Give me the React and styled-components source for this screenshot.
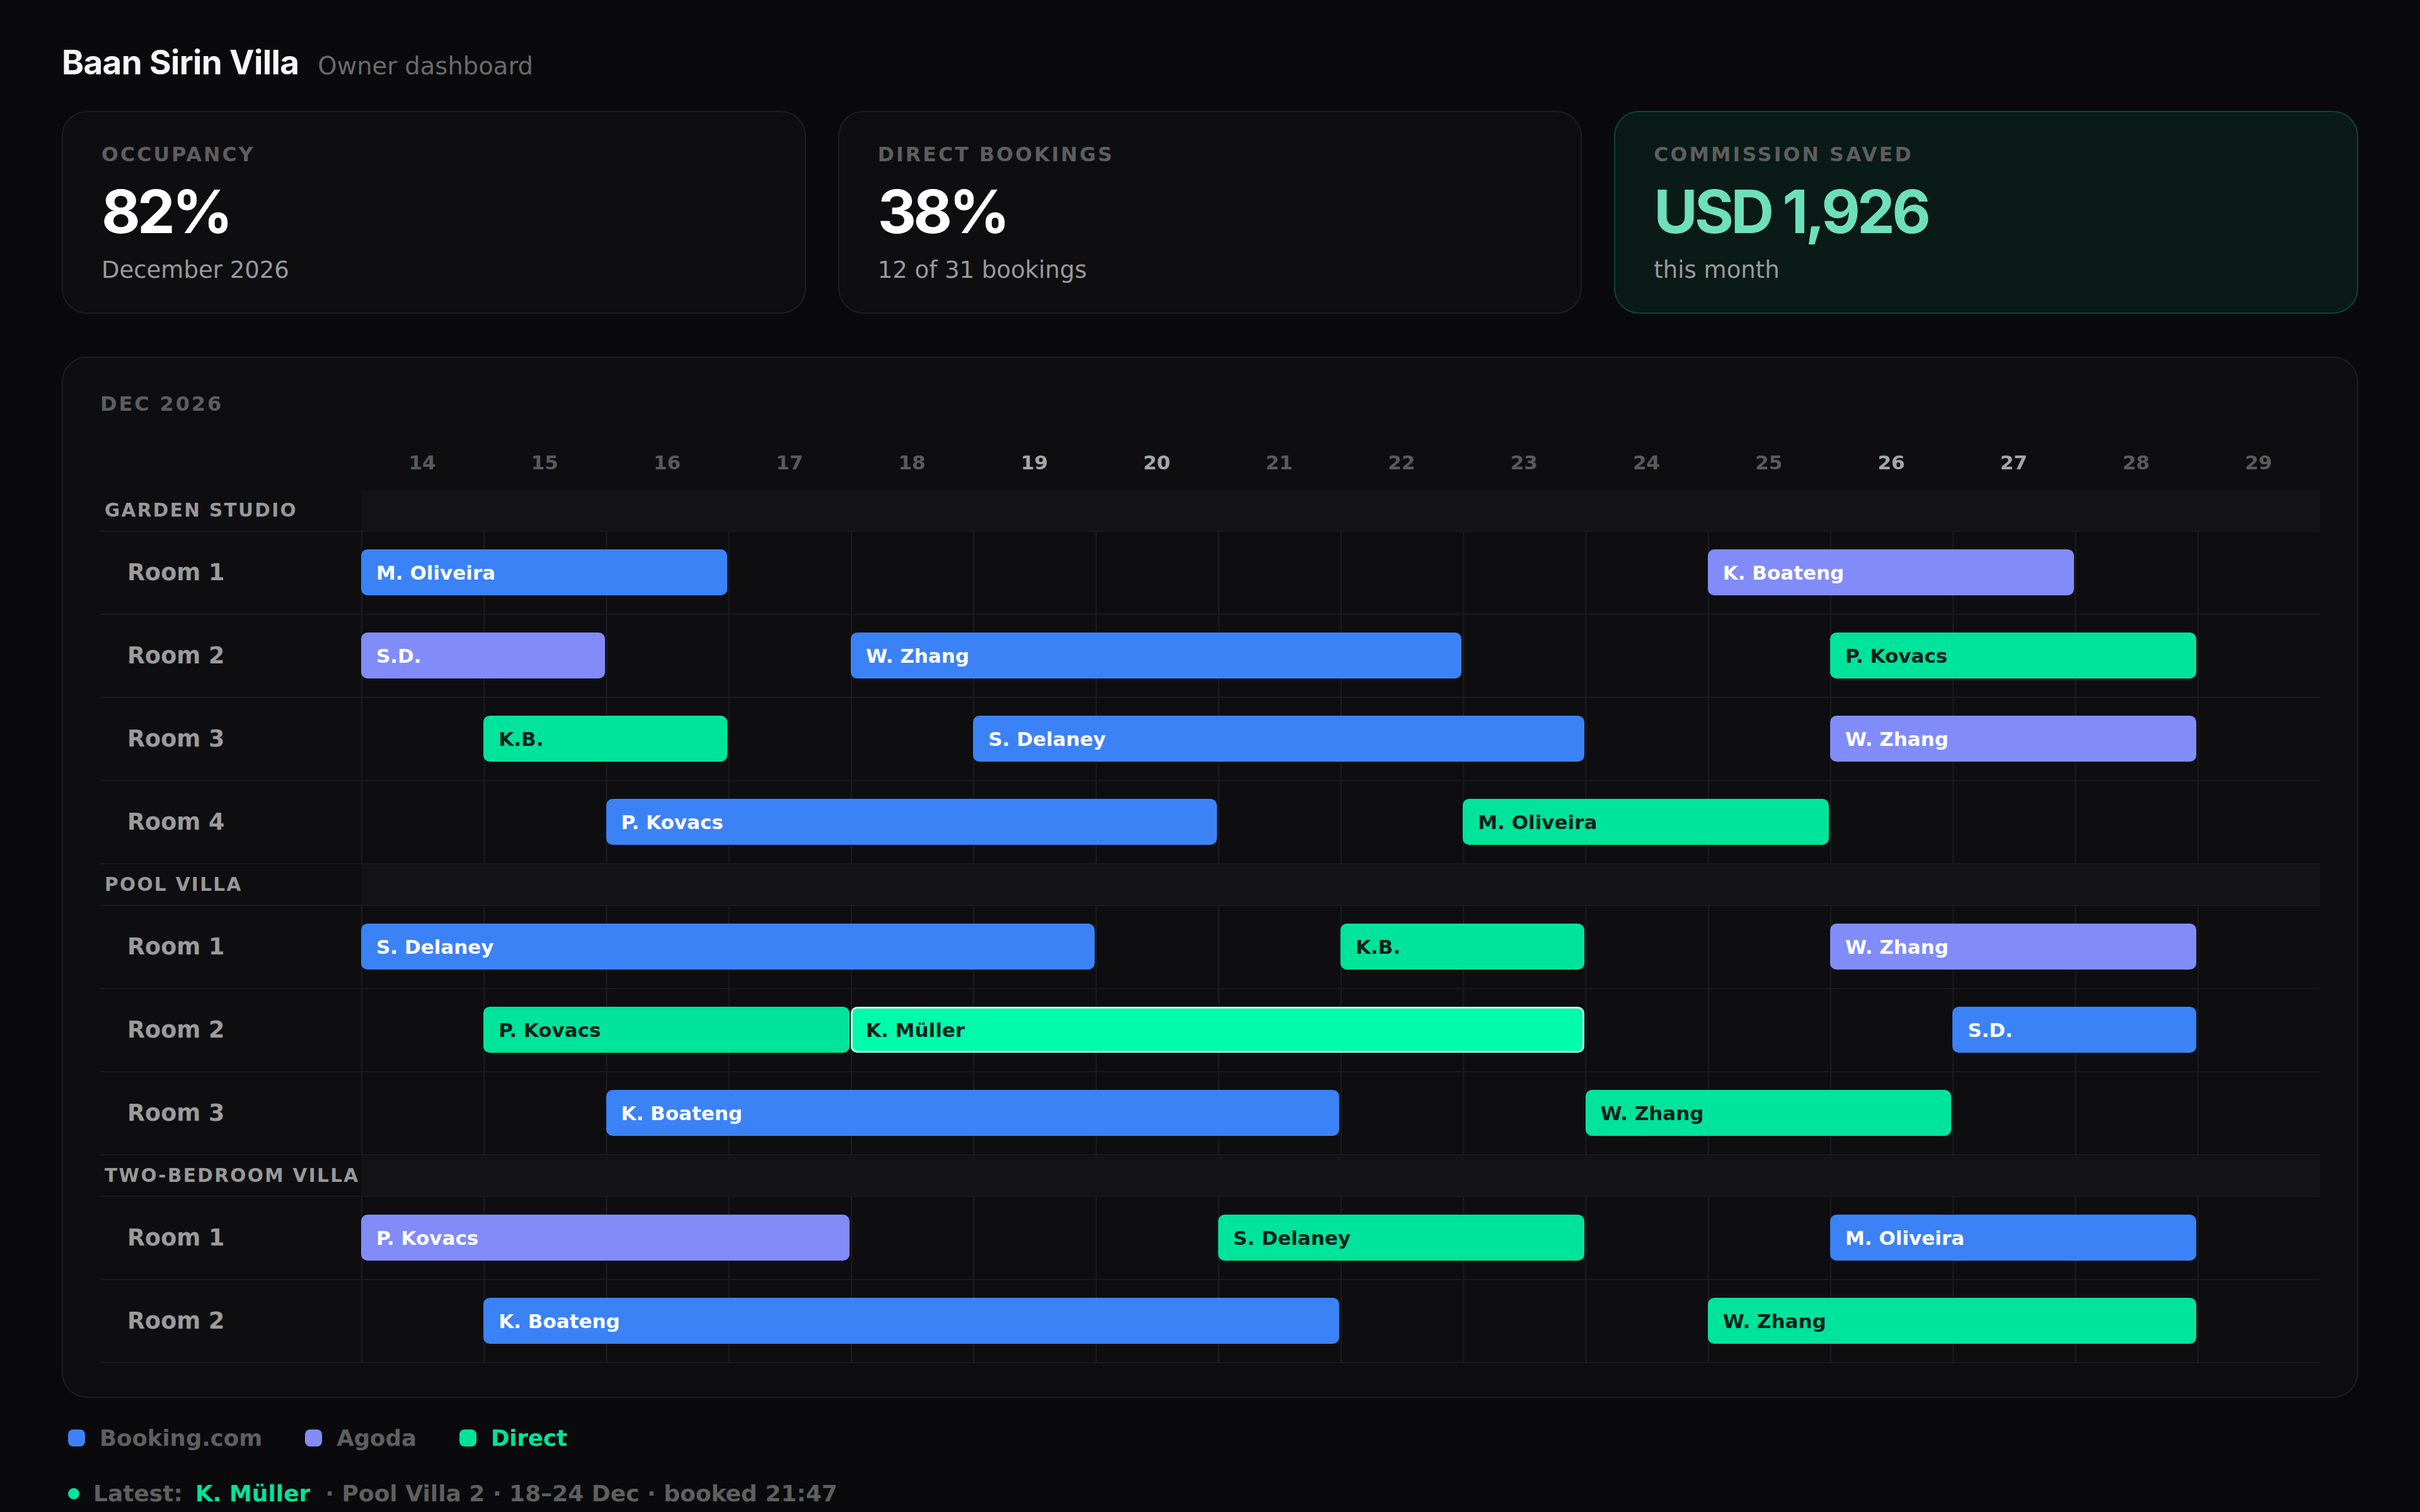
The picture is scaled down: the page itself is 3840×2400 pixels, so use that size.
import React from "react";
import styled, { createGlobalStyle } from "styled-components";

const DAYS = Array.from({ length: 16 }, (_, i) => 14 + i);
const WEEKEND = [19, 20, 26, 27];

const channelColors = {
  booking: { bg: "#3b82f6", fg: "#ffffff" },
  agoda: { bg: "#818cf8", fg: "#ffffff" },
  direct: { bg: "#00e39b", fg: "#06211a" },
};

// start = day of month, nights = number of columns covered
const properties = [
  {
    name: "Garden Studio",
    rooms: [
      [
        { guest: "M. Oliveira", start: 14, nights: 3, ch: "booking" },
        { guest: "K. Boateng", start: 25, nights: 3, ch: "agoda" },
      ],
      [
        { guest: "S.D.", start: 14, nights: 2, ch: "agoda" },
        { guest: "W. Zhang", start: 18, nights: 5, ch: "booking" },
        { guest: "P. Kovacs", start: 26, nights: 3, ch: "direct" },
      ],
      [
        { guest: "K.B.", start: 15, nights: 2, ch: "direct" },
        { guest: "S. Delaney", start: 19, nights: 5, ch: "booking" },
        { guest: "W. Zhang", start: 26, nights: 3, ch: "agoda" },
      ],
      [
        { guest: "P. Kovacs", start: 16, nights: 5, ch: "booking" },
        { guest: "M. Oliveira", start: 23, nights: 3, ch: "direct" },
      ],
    ],
  },
  {
    name: "Pool Villa",
    rooms: [
      [
        { guest: "S. Delaney", start: 14, nights: 6, ch: "booking" },
        { guest: "K.B.", start: 22, nights: 2, ch: "direct" },
        { guest: "W. Zhang", start: 26, nights: 3, ch: "agoda" },
      ],
      [
        { guest: "P. Kovacs", start: 15, nights: 3, ch: "direct" },
        { guest: "K. Müller", start: 18, nights: 6, ch: "direct", fresh: true },
        { guest: "S.D.", start: 27, nights: 2, ch: "booking" },
      ],
      [
        { guest: "K. Boateng", start: 16, nights: 6, ch: "booking" },
        { guest: "W. Zhang", start: 24, nights: 3, ch: "direct" },
      ],
    ],
  },
  {
    name: "Two-Bedroom Villa",
    rooms: [
      [
        { guest: "P. Kovacs", start: 14, nights: 4, ch: "agoda" },
        { guest: "S. Delaney", start: 21, nights: 3, ch: "direct" },
        { guest: "M. Oliveira", start: 26, nights: 3, ch: "booking" },
      ],
      [
        { guest: "K. Boateng", start: 15, nights: 7, ch: "booking" },
        { guest: "W. Zhang", start: 25, nights: 4, ch: "direct" },
      ],
    ],
  },
];

const stats = [
  { label: "Occupancy", value: "82%", note: "December 2026" },
  { label: "Direct bookings", value: "38%", note: "12 of 31 bookings" },
  { label: "Commission saved", value: "USD 1,926", note: "this month", saved: true },
];

const GlobalStyle = createGlobalStyle`
  html, body {
    margin: 0;
    background: #0a0a0c;
  }
  body {
    font-family: "DejaVu Sans", "Liberation Sans", sans-serif;
    color: #e8e8e8;
  }
`;

const Page = styled.div`
  padding: 68px 98px 0;
  min-height: 2400px;
  box-sizing: border-box;
`;

const Header = styled.header`
  display: flex;
  align-items: baseline;
  gap: 30px;
`;

const Title = styled.h1`
  margin: 0;
  font-family: "Inter", "Liberation Sans", sans-serif;
  font-size: 53px;
  font-weight: 700;
  letter-spacing: -0.012em;
  line-height: 1.2;
  color: #f7f7f7;
`;

const Subtitle = styled.span`
  font-size: 38.5px;
  color: #6a6a6a;
`;

const StatGrid = styled.section`
  display: grid;
  grid-template-columns: repeat(3, 1fr);
  gap: 51px;
  margin-top: 44px;
`;

const StatCard = styled.div`
  border: 2px solid ${(p) => (p.$saved ? "#0d4635" : "#1e1e22")};
  background: ${(p) => (p.$saved ? "#0a1a17" : "#0e0e11")};
  border-radius: 40px;
  padding: 47px 61px 45px;
`;

const StatLabel = styled.div`
  font-size: 31.5px;
  font-weight: 700;
  letter-spacing: 0.1em;
  line-height: 40px;
  text-transform: uppercase;
  color: #5e5e5e;
`;

const StatValue = styled.div`
  margin-top: 23px;
  font-family: "Inter", "Liberation Sans", sans-serif;
  font-size: 95px;
  font-weight: 700;
  letter-spacing: -0.05em;
  line-height: 95px;
  color: ${(p) => (p.$saved ? "#6ee0b9" : "#ffffff")};
`;

const StatNote = styled.div`
  margin-top: 24px;
  font-size: 37px;
  line-height: 44px;
  color: #9a9a9a;
`;

const Schedule = styled.section`
  margin-top: 68px;
  border: 2px solid #1e1e22;
  background: #0e0e11;
  border-radius: 40px;
  padding: 53px 59px 53px;
`;

const MonthLabel = styled.div`
  font-size: 32px;
  font-weight: 700;
  letter-spacing: 0.09em;
  line-height: 40px;
  color: #5e5e5e;
`;

const Row = styled.div`
  display: grid;
  grid-template-columns: 414px 1fr;
`;

const DayHeader = styled(Row)`
  margin-top: 44px;
  margin-bottom: 15px;
  height: 58px;
  align-items: center;
`;

const Days = styled.div`
  display: grid;
  grid-template-columns: repeat(16, 1fr);
`;

const DayNum = styled.div`
  text-align: center;
  font-size: 31px;
  font-weight: 700;
  color: ${(p) => (p.$weekend ? "#a6a6a6" : "#5a5a5a")};
`;

const GroupHead = styled(Row)`
  height: 66px;
  box-sizing: border-box;
  border-bottom: 2px solid #1a1a1d;
`;

const GroupName = styled.div`
  display: flex;
  align-items: center;
  padding-left: 7px;
  font-size: 29.5px;
  font-weight: 700;
  letter-spacing: 0.08em;
  text-transform: uppercase;
  color: #989898;
  white-space: nowrap;
`;

const GroupBand = styled.div`
  background: #131316;
`;

const RoomRow = styled(Row)`
  height: 132px;
  box-sizing: border-box;
  border-bottom: 2px solid #1a1a1d;
`;

const RoomName = styled.div`
  display: flex;
  align-items: center;
  padding-left: 43px;
  font-size: 36.5px;
  font-weight: 700;
  color: #9b9b9b;
`;

const Track = styled.div`
  display: grid;
  grid-template-columns: repeat(16, 1fr);
  align-items: center;
  background-image: linear-gradient(to right, #1c1c20 0 2px, transparent 2px);
  background-size: calc(100% / 16) 100%;
`;

const Bar = styled.div`
  grid-row: 1;
  grid-column: ${(p) => p.$col} / span ${(p) => p.$span};
  height: 73px;
  margin-right: 2px;
  box-sizing: border-box;
  border-radius: 10px;
  display: flex;
  align-items: center;
  font-size: 31px;
  font-weight: 700;
  white-space: nowrap;
  overflow: hidden;
  background: ${(p) => (p.$fresh ? "#00fbaa" : channelColors[p.$ch].bg)};
  color: ${(p) => channelColors[p.$ch].fg};
  border: ${(p) => (p.$fresh ? "3px solid #bdf7e4" : "none")};
  padding: 0 ${(p) => (p.$fresh ? "21px" : "24px")};
`;

const Legend = styled.div`
  display: flex;
  align-items: center;
  gap: 68px;
  margin-top: 43px;
  padding-left: 10px;
`;

const LegendItem = styled.div`
  display: flex;
  align-items: center;
  gap: 23px;
  font-size: 35.5px;
  font-weight: 700;
  line-height: 42px;
  color: ${(p) => (p.$active ? "#00e39b" : "#5f5f5f")};
`;

const Swatch = styled.span`
  width: 27px;
  height: 27px;
  border-radius: 8px;
  background: ${(p) => p.$color};
`;

const Latest = styled.div`
  display: flex;
  align-items: center;
  margin-top: 46px;
  padding-left: 10px;
  font-size: 36px;
  font-weight: 700;
  line-height: 42px;
  color: #5f5f5f;
  white-space: pre;
`;

const LiveDot = styled.span`
  width: 18px;
  height: 18px;
  border-radius: 50%;
  background: #00e39b;
  margin-right: 22px;
`;

const Guest = styled.span`
  color: #00e39b;
  margin: 0 24px 0 20px;
`;

export default function App() {
  return (
    <>
      <GlobalStyle />
      <Page>
        <Header>
          <Title>Baan Sirin Villa</Title>
          <Subtitle>Owner dashboard</Subtitle>
        </Header>

        <StatGrid>
          {stats.map((s) => (
            <StatCard key={s.label} $saved={s.saved}>
              <StatLabel>{s.label}</StatLabel>
              <StatValue $saved={s.saved}>{s.value}</StatValue>
              <StatNote>{s.note}</StatNote>
            </StatCard>
          ))}
        </StatGrid>

        <Schedule>
          <MonthLabel>DEC 2026</MonthLabel>
          <DayHeader>
            <div />
            <Days>
              {DAYS.map((d) => (
                <DayNum key={d} $weekend={WEEKEND.includes(d)}>
                  {d}
                </DayNum>
              ))}
            </Days>
          </DayHeader>

          {properties.map((prop) => (
            <React.Fragment key={prop.name}>
              <GroupHead>
                <GroupName>{prop.name}</GroupName>
                <GroupBand />
              </GroupHead>
              {prop.rooms.map((bookings, i) => (
                <RoomRow key={i}>
                  <RoomName>Room {i + 1}</RoomName>
                  <Track>
                    {bookings.map((b) => (
                      <Bar
                        key={b.guest + b.start}
                        $col={b.start - 13}
                        $span={b.nights}
                        $ch={b.ch}
                        $fresh={b.fresh}
                      >
                        {b.guest}
                      </Bar>
                    ))}
                  </Track>
                </RoomRow>
              ))}
            </React.Fragment>
          ))}
        </Schedule>

        <Legend>
          <LegendItem>
            <Swatch $color="#3b82f6" />
            Booking.com
          </LegendItem>
          <LegendItem>
            <Swatch $color="#818cf8" />
            Agoda
          </LegendItem>
          <LegendItem $active>
            <Swatch $color="#00e39b" />
            Direct
          </LegendItem>
        </Legend>

        <Latest>
          <LiveDot />
          Latest:
          <Guest>K. Müller</Guest>
          {"· Pool Villa 2 · 18–24 Dec · booked 21:47"}
        </Latest>
      </Page>
    </>
  );
}
